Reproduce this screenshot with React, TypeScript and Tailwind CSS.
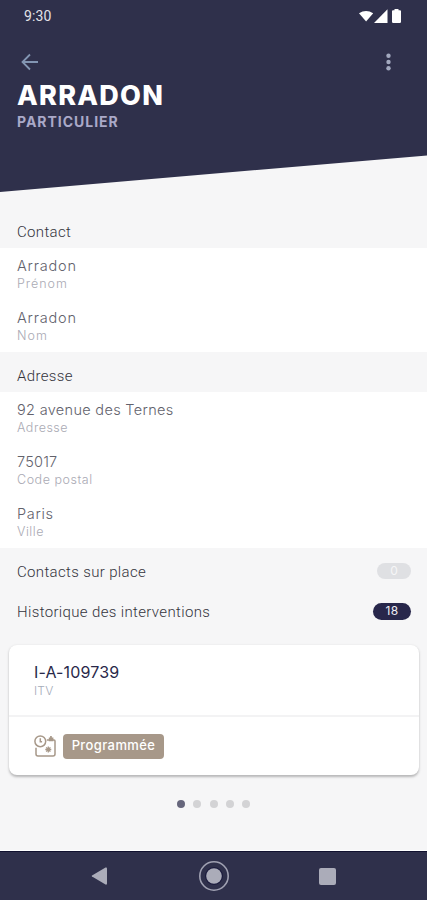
import type { ReactNode } from "react";

const BODY = "font-['Inter','Noto_Sans',sans-serif]";
const HEAD = "font-['Roboto','Noto_Sans',sans-serif]";

function SectionTitle({ children, badge }: { children: ReactNode; badge?: ReactNode }) {
  return (
    <div className={`${HEAD} flex h-10 items-center justify-between pl-[17px] pr-4 pt-2 text-[15px] leading-5 text-[#34343c]`}>
      <span className="font-light tracking-[0.35px]">{children}</span>
      {badge}
    </div>
  );
}

function Field({ value, label, valueSpacing, labelSpacing }: { value: string; label: string; valueSpacing: string; labelSpacing: string }) {
  return (
    <div className={`${BODY} flex h-[52px] flex-col pl-[17px] pt-[9px]`}>
      <span className={`text-[14.5px] font-light leading-[18px] text-[#62626c] ${valueSpacing}`}>{value}</span>
      <span className={`text-[12.5px] font-light leading-[17px] text-[#aaaab4] ${labelSpacing}`}>{label}</span>
    </div>
  );
}

export default function App() {
  return (
    <div className="flex h-[900px] w-[427px] flex-col overflow-hidden bg-[#f6f6f7]">
      <header className="h-[192px] shrink-0 bg-[#2f304b] [clip-path:polygon(0_0,100%_0,100%_155.5px,0_192px)]">
        <div className="flex h-8 items-center justify-between pl-6 pr-[25px]">
          <span className={`${HEAD} text-[14px] leading-5 tracking-[0.1px] text-[#e3e3e8]`}>9:30</span>
          <svg width="44" height="16" viewBox="0 0 44 16" fill="#fff">
            <path d="M1 5.2Q8 .8 15.2 5.2L8.1 13.5Z" />
            <path d="M16 15 29.5 1.2V15Z" />
            <path d="M34 3.3q0-1 1-1h1.5V1.1h4v1.2H42q1 0 1 1v10.4q0 1.3-1.2 1.3h-6.6Q34 15 34 13.7Z" />
          </svg>
        </div>
        <div className="flex h-[50px] items-center justify-between pl-5 pr-[35px] pt-[9px]">
          <svg width="20" height="20" viewBox="0 0 20 20" fill="none" stroke="#8295b2" strokeWidth="1.8">
            <path d="M18 10H3M10 2.5 2.5 10 10 17.5" />
          </svg>
          <svg width="7" height="20" viewBox="0 0 7 20" fill="#a3a9bf">
            <circle cx="3.5" cy="3.8" r="2.2" />
            <circle cx="3.5" cy="10" r="2.2" />
            <circle cx="3.5" cy="16.3" r="2.2" />
          </svg>
        </div>
        <div className={`${BODY} flex flex-col pl-[17px]`}>
          <h1 className="text-[27px] font-extrabold leading-[28px] tracking-[1.25px] text-white">ARRADON</h1>
          <p className="mt-[2px] text-[14px] font-bold leading-5 tracking-[0.98px] text-[#aaa9c8]">PARTICULIER</p>
        </div>
      </header>

      <main className="flex flex-1 flex-col pt-4">
        <SectionTitle>Contact</SectionTitle>
        <div className="bg-white">
          <Field value="Arradon" label="Prénom" valueSpacing="tracking-[0.8px]" labelSpacing="tracking-[0.95px]" />
          <Field value="Arradon" label="Nom" valueSpacing="tracking-[0.8px]" labelSpacing="tracking-[1px]" />
        </div>
        <SectionTitle>Adresse</SectionTitle>
        <div className="bg-white">
          <Field value="92 avenue des Ternes" label="Adresse" valueSpacing="tracking-[0.32px]" labelSpacing="tracking-[0.5px]" />
          <Field value="75017" label="Code postal" valueSpacing="tracking-[0.2px]" labelSpacing="tracking-[0.54px]" />
          <Field value="Paris" label="Ville" valueSpacing="tracking-[0.7px]" labelSpacing="tracking-[0.5px]" />
        </div>
        <SectionTitle
          badge={<span className={`${BODY} mb-0.5 flex h-4 w-[34px] items-center justify-center rounded-full bg-[#dfe0e3] text-[12px] text-[#f6f6f7]`}>0</span>}
        >
          Contacts sur place
        </SectionTitle>
        <SectionTitle
          badge={<span className={`${BODY} mb-0.5 flex h-[17px] w-[38px] items-center justify-center rounded-full bg-[#28274b] text-[12px] tracking-[0.3px] text-[#eeeef4]`}>18</span>}
        >
          Historique des interventions
        </SectionTitle>

        <article className={`${BODY} ml-[9px] mr-2 mt-[17px] flex h-[130px] flex-col rounded-lg bg-white shadow-[0_1.5px_2.5px_rgba(0,0,0,0.26)]`}>
          <div className="flex h-[72px] flex-col border-b-2 border-[#f3f3f4] pl-[25px] pt-[17px]">
            <span className="text-[16px] leading-5 tracking-[0.15px] text-[#29294a]">I-A-109739</span>
            <span className="text-[12px] font-light leading-[17px] tracking-[0.2px] text-[#a5abb9]">ITV</span>
          </div>
          <div className="flex flex-1 items-center gap-[7px] pl-[25px]">
            <svg width="22" height="22" viewBox="0 0 22 22" fill="none" stroke="#a79889" strokeWidth="1.5">
              <path d="M12.8 5H20a1 1 0 0 1 1 1V19a2 2 0 0 1-2 2H4a2 2 0 0 1-2-2V12.8" />
              <circle cx="6.3" cy="6.3" r="5.4" fill="#fff" />
              <path d="M6.3 3.2v3.6h1.8" />
              <path d="M14.3 11.5v6M11.3 14.5h6M12.2 12.4l4.2 4.2M16.4 12.4l-4.2 4.2" strokeWidth="1.3" />
              <path d="M14.8 2.6h1.3V1h1.7v1.6h1.6v3.6h-4.6Z" fill="#a79889" stroke="none" />
            </svg>
            <span className="flex h-[25px] w-[101px] items-center justify-center rounded bg-[#a79889] text-[13px] font-medium tracking-[0.4px] text-white">Programmée</span>
          </div>
        </article>

        <div className="mt-[25px] flex justify-center gap-[8.2px]">
          <i className="size-2 rounded-full bg-[#66667c]" />
          <i className="size-2 rounded-full bg-[#d3d3d5]" />
          <i className="size-2 rounded-full bg-[#d3d3d5]" />
          <i className="size-2 rounded-full bg-[#d3d3d5]" />
          <i className="size-2 rounded-full bg-[#d3d3d5]" />
        </div>
      </main>

      <nav className="flex h-[49px] shrink-0 items-center justify-between border-t border-t-[#11112f] bg-[#2f304b] pl-[91px] pr-[91px] shadow-[0_-1px_0_white]">
        <svg width="17" height="20" viewBox="0 0 17 20" fill="#abacb9">
          <path d="M1 9.5Q.2 10 1 10.6L14.5 18.5Q16 19 16 17.5V2.5Q16 1 14.5 1.6Z" />
        </svg>
        <svg width="32" height="32" viewBox="0 0 32 32" fill="none">
          <circle cx="16" cy="16" r="14.2" stroke="#a0a1b2" strokeWidth="1.6" />
          <circle cx="16" cy="16" r="9" fill="#1b1b3d" />
          <circle cx="16" cy="16" r="7.8" fill="#abacb9" />
        </svg>
        <i className="size-[17px] rounded-[2px] bg-[#abacb9]" />
      </nav>
    </div>
  );
}
